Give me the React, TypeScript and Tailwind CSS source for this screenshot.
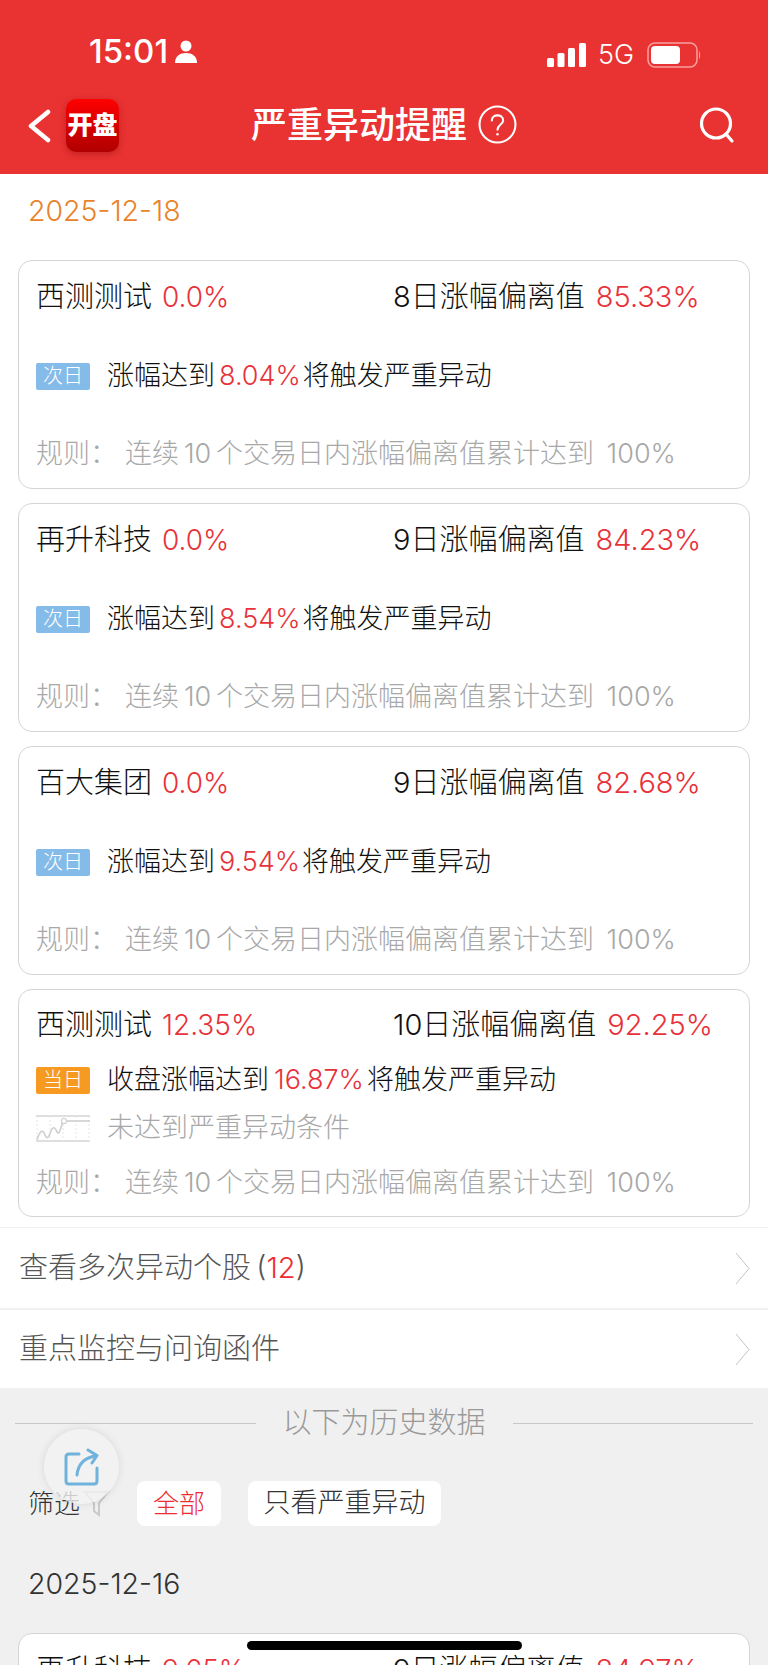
import React from 'react';

const rule = '连续\u200910\u2009个交易日内涨幅偏离值累计达到\u00a0\u2009100%';

const cards = [
  { name: '西测测试', pct: '0.0%', days: '8日涨幅偏离值', dev: '85.33%', target: '8.04%' },
  { name: '再升科技', pct: '0.0%', days: '9日涨幅偏离值', dev: '84.23%', target: '8.54%' },
  { name: '百大集团', pct: '0.0%', days: '9日涨幅偏离值', dev: '82.68%', target: '9.54%' },
];

function HeadRow({ name, pct, days, dev }: { name: string; pct: string; days: string; dev: string }) {
  return (
    <div className="flex h-9 items-center text-[29px] text-[#111]">
      <div className="flex w-[357px] items-center gap-[10px]">
        <span>{name}</span>
        <span className="text-[28px] text-[#e8323a]">{pct}</span>
      </div>
      <div className="flex items-center gap-[11px]">
        <span>{days}</span>
        <span className="text-[#e8323a]">{dev}</span>
      </div>
    </div>
  );
}

function Badge({ text, color }: { text: string; color: string }) {
  return (
    <span className={`flex h-[27px] w-[54px] shrink-0 items-center justify-center rounded-[2px] text-[20px] text-white ${color}`}>
      {text}
    </span>
  );
}

function RuleRow() {
  return (
    <div className="flex h-9 items-center text-[27px] text-[#a8a8a8]">
      <span className="w-[89px] shrink-0">规则：</span>
      <span>{rule}</span>
    </div>
  );
}

function Chevron() {
  return (
    <svg width="15" height="33" viewBox="0 0 15 33" fill="none" stroke="#c4c4c4" strokeWidth="1">
      <path d="M1 1L14 16.5L1 32" />
    </svg>
  );
}

function ChartIcon() {
  return (
    <svg width="54" height="27" viewBox="0 0 54 27" fill="none" className="shrink-0">
      <path d="M0 1H54" stroke="#d4d4d4" strokeWidth="1.5" />
      <path d="M0 26H54" stroke="#d4d4d4" strokeWidth="1.5" />
      <path d="M1 1V26M14 1V26M27 1V26M40 1V26M53 1V26" stroke="#e6e6e6" strokeWidth="1" strokeDasharray="2 2" />
      <path d="M1 25C4 15 7 14 9 20C11 25 13 22 15 16C17 11 19 12 21 17C24 21 25 10 27 7" stroke="#cfcfcf" strokeWidth="1.6" />
      <circle cx="28" cy="6" r="2.5" stroke="#cfcfcf" strokeWidth="1.2" fill="#fff" />
      <path d="M31 6H54" stroke="#cfcfcf" strokeWidth="1.6" />
    </svg>
  );
}

export default function App() {
  return (
    <div className="relative h-[1665px] w-[768px] overflow-hidden bg-white font-['Inter','Noto_Sans_CJK_SC',sans-serif] font-light">
      {/* status bar + nav */}
      <div className="h-[174px] bg-[#e93232] text-white">
        <div className="flex h-[87px] items-end justify-between pb-[19px] pl-[89px] pr-[67px]">
          <div className="flex items-center gap-[7px]">
            <span className="text-[33px] leading-none font-medium">15:01</span>
            <svg width="22" height="23" viewBox="0 0 22 23" fill="#fff">
              <circle cx="11" cy="6" r="5.5" />
              <path d="M0 23C0 16 5 13 11 13C17 13 22 16 22 23Z" />
            </svg>
          </div>
          <div className="flex items-center gap-[13px]">
            <svg width="39" height="24" viewBox="0 0 39 24" fill="#fff" className="-mr-px">
              <rect x="0" y="15" width="7" height="9" rx="1.5" />
              <rect x="10.5" y="10" width="7" height="14" rx="1.5" />
              <rect x="21" y="5" width="7" height="19" rx="1.5" />
              <rect x="32" y="0" width="7" height="24" rx="1.5" />
            </svg>
            <span className="text-[27px] leading-none">5G</span>
            <svg width="54" height="26" viewBox="0 0 54 26" fill="none">
              <rect x="1" y="1" width="49" height="24" rx="7" stroke="#f9a0a0" strokeWidth="1.5" />
              <rect x="4" y="4" width="29" height="18" rx="4" fill="#fff" />
              <path d="M52 9C53.5 10 53.5 16 52 17Z" fill="#f9a0a0" />
            </svg>
          </div>
        </div>
        <div className="relative flex h-[87px] items-center justify-center pb-[12px]">
          <div className="absolute top-[12px] left-[28px] flex items-center gap-[15px]">
            <svg width="23" height="34" viewBox="0 0 23 34" fill="none" stroke="#fff" strokeWidth="4.5" strokeLinecap="round" strokeLinejoin="round">
              <path d="M20 3L3 17L20 31" />
            </svg>
            <div className="flex h-[53px] w-[53px] items-center justify-center rounded-[10px] bg-gradient-to-b from-[#ff0000] to-[#b00000] text-[25px] leading-none font-black whitespace-nowrap shadow-[0_2px_6px_rgba(120,0,0,0.35)]">
              开盘
            </div>
          </div>
          <div className="flex items-center gap-[11px]">
            <span className="text-[36px] leading-none font-medium">严重异动提醒</span>
            <svg width="39" height="39" viewBox="0 0 38 38" fill="none" stroke="#fff" strokeWidth="2">
              <circle cx="19" cy="19" r="17.5" />
              <path d="M13.5 15C13.5 8.5 24.5 8.5 24.5 15C24.5 19 19 19 19 24" strokeLinecap="round" />
              <circle cx="19" cy="28.5" r="1.2" fill="#fff" stroke="none" />
            </svg>
          </div>
          <svg className="absolute top-[19px] right-[33px]" width="37" height="38" viewBox="0 0 37 38" fill="none" stroke="#fff" strokeWidth="3.2" strokeLinecap="round">
            <circle cx="18" cy="17.5" r="14.5" />
            <path d="M28 28L34 35" />
          </svg>
        </div>
      </div>

      {/* today */}
      <div className="flex h-[86px] items-start pt-[19px] pl-[28px] text-[28.5px] leading-[36px] text-[#e8832a]">2025-12-18</div>
      <div className="flex flex-col gap-[14px] px-[18px]">
        {cards.map((c, i) => (
          <div key={i} className="flex h-[229px] flex-col rounded-[14px] border border-[#d4d4d4] px-[17px] pt-[18px]">
            <HeadRow name={c.name} pct={c.pct} days={c.days} dev={c.dev} />
            <div className="mt-[43px] flex h-9 items-center text-[27px] text-[#111]">
              <Badge text="次日" color="bg-[#85bbe8]" />
              <span className="ml-[17px]">涨幅达到</span>
              <span className="mr-[2px] ml-[4px] text-[#e8323a]">{c.target}</span>
              <span>将触发严重异动</span>
            </div>
            <div className="mt-[42px]">
              <RuleRow />
            </div>
          </div>
        ))}
        <div className="flex h-[228px] flex-col rounded-[14px] border border-[#d4d4d4] px-[17px] pt-[17px]">
          <HeadRow name="西测测试" pct="12.35%" days="10日涨幅偏离值" dev="92.25%" />
          <div className="mt-[19px] flex h-9 items-center text-[27px] text-[#111]">
            <Badge text="当日" color="bg-[#f79a22]" />
            <span className="ml-[17px]">收盘涨幅达到</span>
            <span className="mr-[3px] ml-[5px] text-[#e8323a]">16.87%</span>
            <span>将触发严重异动</span>
          </div>
          <div className="mt-[12px] flex h-9 items-center text-[27px] text-[#a8a8a8]">
            <ChartIcon />
            <span className="ml-[17px]">未达到严重异动条件</span>
          </div>
          <div className="mt-[19px]">
            <RuleRow />
          </div>
        </div>
      </div>

      {/* links */}
      <div className="mt-[10px] border-t border-[#f2f2f6]">
        <div className="flex h-[80px] items-center justify-between pr-[18px] pl-[19px] text-[29px] text-[#555]">
          <span>
            查看多次异动个股{'\u2009'}(<span className="text-[#ee2d32]">12</span>)
          </span>
          <Chevron />
        </div>
        <div className="flex h-[80px] items-center justify-between border-t-2 border-[#f0f0f0] pr-[18px] pl-[19px] text-[29px] text-[#555]">
          <span>重点监控与问询函件</span>
          <Chevron />
        </div>
      </div>

      {/* history */}
      <div className="h-[400px] bg-[#f0f0f0]">
        <div className="flex h-[70px] items-center px-[15px] text-[29px] text-[#999]">
          <div className="h-px flex-1 bg-[#c8c8c8]" />
          <span className="mx-[27px]">以下为历史数据</span>
          <div className="h-px flex-1 bg-[#c8c8c8]" />
        </div>
        <div className="mt-[23px] flex h-[45px] items-center pl-[28px] text-[26px] text-[#333]">
          <span>筛选</span>
          <svg width="27" height="27" viewBox="0 0 27 27" fill="none" stroke="#c9c9c9" strokeWidth="2" className="ml-[3px]">
            <path d="M2 2H25L16 13V25L11 21V13Z" />
          </svg>
          <span className="ml-[27px] flex h-[45px] w-[84px] items-center justify-center rounded-[8px] bg-white text-[#ee2d32]">全部</span>
          <span className="ml-[27px] flex h-[45px] w-[193px] items-center justify-center rounded-[8px] bg-white text-[27px] text-[#333]">只看严重异动</span>
        </div>
        <div className="mt-[40px] pl-[28px] text-[28.5px] leading-[36px] text-[#333]">2025-12-16</div>
        <div className="mx-[18px] mt-[31px] h-[228px] rounded-[14px] border border-[#d4d4d4] bg-white px-[17px] pt-[18px]">
          <HeadRow name="再升科技" pct="9.65%" days="9日涨幅偏离值" dev="84.97%" />
        </div>
      </div>

      {/* floating share button */}
      <div className="absolute top-[1429px] left-[44px] flex h-[75px] w-[75px] items-center justify-center rounded-full bg-[#f3f3f3]/80 shadow-[0_0_8px_rgba(0,0,0,0.1)]">
        <svg width="36" height="38" viewBox="0 0 36 38" fill="none" stroke="#6fb3dc" strokeWidth="3" strokeLinecap="round" strokeLinejoin="round">
          <path d="M15 6H5C3 6 2 7 2 9V33C2 35 3 36 5 36H30C32 36 33 35 33 33V20" />
          <path d="M13 27C14 17 20 10 31 8" />
          <path d="M24 2L33 7.5L28 15" />
        </svg>
      </div>

      {/* home indicator */}
      <div className="absolute top-[1641px] left-[247px] h-[9px] w-[275px] rounded-full bg-black" />
    </div>
  );
}
